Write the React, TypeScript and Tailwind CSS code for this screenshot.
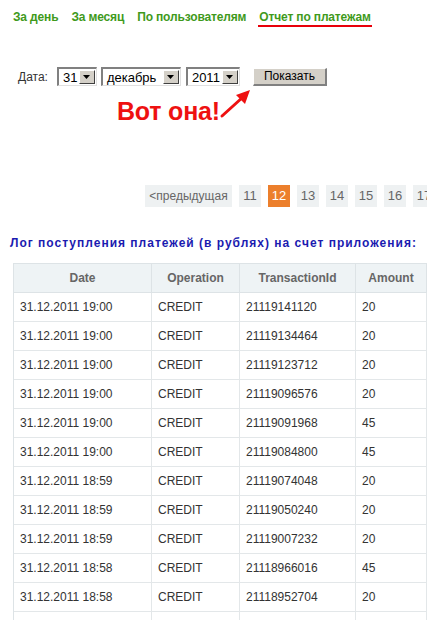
const NAV = ['За день', 'За месяц', 'По пользователям', 'Отчет по платежам'];

const ROWS = [
  ['31.12.2011 19:00', 'CREDIT', '21119141120', '20'],
  ['31.12.2011 19:00', 'CREDIT', '21119134464', '20'],
  ['31.12.2011 19:00', 'CREDIT', '21119123712', '20'],
  ['31.12.2011 19:00', 'CREDIT', '21119096576', '20'],
  ['31.12.2011 19:00', 'CREDIT', '21119091968', '45'],
  ['31.12.2011 19:00', 'CREDIT', '21119084800', '45'],
  ['31.12.2011 18:59', 'CREDIT', '21119074048', '20'],
  ['31.12.2011 18:59', 'CREDIT', '21119050240', '20'],
  ['31.12.2011 18:59', 'CREDIT', '21119007232', '20'],
  ['31.12.2011 18:58', 'CREDIT', '21118966016', '45'],
  ['31.12.2011 18:58', 'CREDIT', '21118952704', '20'],
  ['', '', '', ''],
];

const COLS = ['w-[138px]', 'w-[88px]', 'w-[116px]', 'w-[71px]'];
const HEAD = ['Date', 'Operation', 'TransactionId', 'Amount'];

function Select({ value, width }: { value: string; width: string }) {
  return (
    <div className={`${width} h-[19px] flex items-stretch bg-white border-t-2 border-l-2 border-t-[#808080] border-l-[#808080] border-b border-r border-b-[#e0e0e0] border-r-[#e0e0e0]`}>
      <div className="flex-1 flex items-center pl-[4px] text-[13px] text-black leading-none">{value}</div>
      <div className="w-[16px] m-[1px] bg-[#d4d0c8] flex items-center justify-center border-t border-l border-t-white border-l-white border-b border-r border-b-[#404040] border-r-[#404040]">
        <svg width="7" height="4" viewBox="0 0 7 4"><path d="M0 0h7L3.5 4z" fill="#000" /></svg>
      </div>
    </div>
  );
}

export default function App() {
  return (
    <div className="w-[427px] h-[620px] overflow-hidden bg-white font-['Liberation_Sans',Arial,sans-serif]">
      {/* nav */}
      <div className="flex items-start gap-[13px] pl-[13px] pt-[10px] h-[40px]">
        {NAV.map((n, i) => (
          <span
            key={n}
            className={`text-[12px] leading-[14px] font-bold tracking-[-0.15px] text-[#3f9a1c] whitespace-nowrap ${i === 3 ? 'border-b-2 border-[#e8000a] pb-[1px] px-[1px] -ml-[1px]' : ''}`}
          >
            {n}
          </span>
        ))}
      </div>

      {/* form */}
      <div className="flex items-center mt-[27px] pl-[18px] h-[19px]">
        <span className="text-[12px] text-[#333] mr-[9px]">Дата:</span>
        <Select value="31" width="w-[40px]" />
        <div className="w-[4px]" />
        <Select value="декабрь" width="w-[80px]" />
        <div className="w-[5px]" />
        <Select value="2011" width="w-[54px]" />
        <button className="ml-[13px] w-[74px] h-[18px] bg-[#d4d0c8] text-[12px] text-black leading-none border-t border-l border-t-white border-l-white border-b-2 border-r-2 border-b-[#808080] border-r-[#808080]">
          Показать
        </button>
      </div>

      {/* annotation */}
      <div className="flex items-start pl-[117px] mt-[10px] h-[39px]">
        <span className="text-[25px] font-bold leading-[30px] text-[#ee1111] tracking-[-0.2px]">Вот она!</span>
        <svg width="34" height="34" viewBox="0 0 34 34" className="-mt-[10px] -ml-[1px]">
          <path d="M3 30 L24 11" stroke="#ee1111" strokeWidth="3" strokeLinecap="round" />
          <path d="M31 4 L17 9 L26 18 Z" fill="#ee1111" />
        </svg>
      </div>

      {/* pagination */}
      <div className="flex items-center gap-[7px] pl-[145px] mt-[50px] h-[22px]">
        <div className="shrink-0 w-[87px] h-[22px] bg-[#eef1f2] flex items-center justify-center text-[12px] text-[#666]">
          &lt;предыдущая
        </div>
        {['11', '12', '13', '14', '15', '16', '17'].map(p => (
          <div
            key={p}
            className={`shrink-0 w-[22px] h-[22px] flex items-center justify-center text-[13px] ${p === '12' ? 'bg-[#ec7f2c] text-white' : 'bg-[#eef1f2] text-[#666]'}`}
          >
            {p}
          </div>
        ))}
      </div>

      {/* title */}
      <div className="pl-[10px] mt-[29px] text-[12px] leading-[14px] font-bold text-[#1b1bb0] tracking-[1px] whitespace-nowrap">
        Лог поступления платежей (в рублях) на счет приложения:
      </div>

      {/* table */}
      <div className="ml-[13px] mt-[13px] w-[414px] border-l border-t border-[#dde3e6]">
        <div className="flex h-[29px] bg-[#eef3f5]">
          {HEAD.map((h, i) => (
            <div key={h} className={`${COLS[i]} shrink-0 flex items-center justify-center border-r border-b border-[#dde3e6] text-[12px] font-bold text-[#666]`}>
              {h}
            </div>
          ))}
        </div>
        {ROWS.map((r, ri) => (
          <div key={ri} className="flex h-[29px]">
            {r.map((c, i) => (
              <div key={i} className={`${COLS[i]} shrink-0 flex items-center pl-[6px] border-r border-b border-[#e3e7e9] text-[12px] text-[#333]`}>
                {c}
              </div>
            ))}
          </div>
        ))}
      </div>
    </div>
  );
}
